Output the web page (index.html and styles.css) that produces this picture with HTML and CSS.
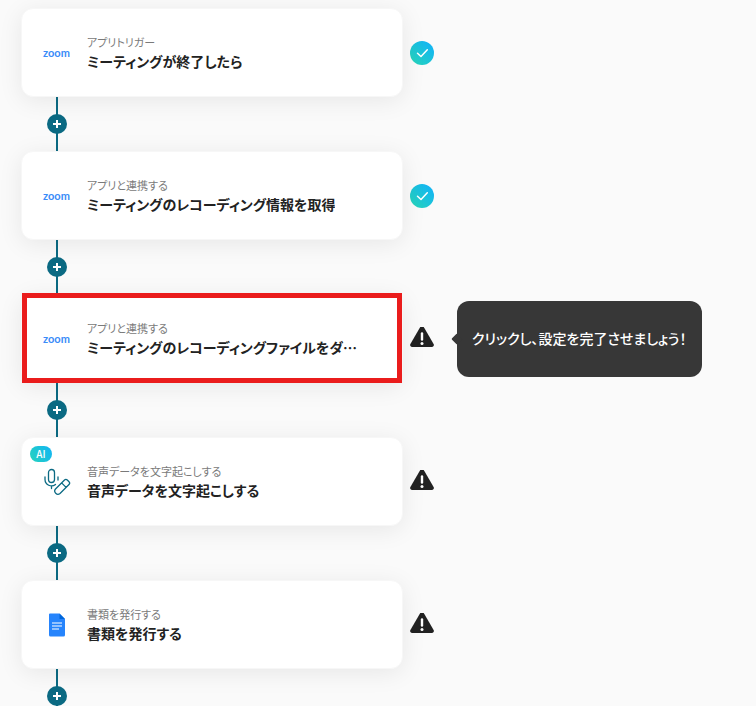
FILE: index.html
```html
<!DOCTYPE html>
<html lang="ja">
<head>
<meta charset="utf-8">
<meta name="viewport" content="width=device-width, initial-scale=1">
<title>フロー</title>
<link rel="stylesheet" href="styles.css">
</head>
<body>
<svg class="defs" aria-hidden="true">
  <defs>
    <linearGradient id="fresh" x1="0" y1="1" x2="1" y2="0">
      <stop offset="0.1" stop-color="#26d3bd"/>
      <stop offset="0.9" stop-color="#12b4f5"/>
    </linearGradient>
    <symbol id="done" viewBox="0 0 24 24">
      <circle cx="12" cy="12" r="12" fill="url(#fresh)"/>
      <path d="M7.5 12.2l3.5 3.3 6.3-6.8" fill="none" stroke="#fff" stroke-width="1.5" stroke-linecap="round" stroke-linejoin="round"/>
    </symbol>
    <symbol id="warn" viewBox="0 0 24 24">
      <path d="M10.1 1.2a2.2 2.2 0 0 1 3.8 0l9.700 16.700a2.100 2.100 0 0 1-1.800 3.100H2.200a2.100 2.100 0 0 1-1.800-3.100z" fill="#222" transform="translate(0 -1)"/>
      <path d="M12 6.500v6" stroke="#fff" stroke-width="2.400" stroke-linecap="round"/>
      <circle cx="12" cy="16.500" r="1.500" fill="#fff"/>
    </symbol>
    <symbol id="plus" viewBox="0 0 20 20">
      <path d="M10 6v8M6 10h8" stroke="#fff" stroke-width="2"/>
    </symbol>
  </defs>
</svg>
<main class="flow">
  <section class="step">
    <button class="card" type="button">
      <span class="app zoom">zoom</span>
      <span class="text"><span class="kind">アプリトリガー</span><span class="title">ミーティングが終了したら</span></span>
    </button>
    <svg class="status" role="img" aria-label="設定済み"><use href="#done"/></svg>
  </section>
  <div class="link"><button class="add" type="button" aria-label="追加"><svg><use href="#plus"/></svg></button></div>

  <section class="step">
    <button class="card" type="button">
      <span class="app zoom">zoom</span>
      <span class="text"><span class="kind">アプリと連携する</span><span class="title">ミーティングのレコーディング情報を取得</span></span>
    </button>
    <svg class="status" role="img" aria-label="設定済み"><use href="#done"/></svg>
  </section>
  <div class="link"><button class="add" type="button" aria-label="追加"><svg><use href="#plus"/></svg></button></div>

  <section class="step">
    <button class="card marked" type="button">
      <span class="app zoom">zoom</span>
      <span class="text"><span class="kind">アプリと連携する</span><span class="title">ミーティングのレコーディングファイルをダ…</span></span>
    </button>
    <svg class="status" role="img" aria-label="未設定"><use href="#warn"/></svg>
    <div class="tip" role="tooltip">クリックし、設定を完了させましょう！</div>
  </section>
  <div class="link"><button class="add" type="button" aria-label="追加"><svg><use href="#plus"/></svg></button></div>

  <section class="step">
    <button class="card" type="button">
      <span class="badge">AI</span>
      <span class="app"><svg class="voice" viewBox="0 0 28 28" aria-hidden="true">
        <g fill="none" stroke="#0b6a83" stroke-width="1.300" stroke-linecap="round" stroke-linejoin="round">
          <rect x="5.500" y="1.500" width="6" height="13" rx="3"/>
          <path d="M2 9v2.500a6.500 6.500 0 0 0 10.500 5M15 9v3M8.500 18v2.500"/>
          <path d="M12.500 21l9-9a2 2 0 0 1 2.800 0l1.700 1.700a2 2 0 0 1 0 2.800l-9 9a3.200 3.200 0 0 1-4.500-4.500zM18.600 14.900l4.500 4.500"/>
        </g>
      </svg></span>
      <span class="text"><span class="kind">音声データを文字起こしする</span><span class="title">音声データを文字起こしする</span></span>
    </button>
    <svg class="status" role="img" aria-label="未設定"><use href="#warn"/></svg>
  </section>
  <div class="link"><button class="add" type="button" aria-label="追加"><svg><use href="#plus"/></svg></button></div>

  <section class="step">
    <button class="card" type="button">
      <span class="app"><svg class="doc" viewBox="0 0 18 24" aria-hidden="true">
        <path d="M2 .5h9.500L17 6v16a1.500 1.500 0 0 1-1.500 1.500h-13A1.500 1.500 0 0 1 1 22V1.500A1 1 0 0 1 2 .5z" fill="#2684fc"/>
        <path d="M11.500.5L17 6h-5.500z" fill="#0066da"/>
        <path d="M4 10h10M4 13h10M4 16h7" stroke="#fff" stroke-width="1.200"/>
      </svg></span>
      <span class="text"><span class="kind">書類を発行する</span><span class="title">書類を発行する</span></span>
    </button>
    <svg class="status" role="img" aria-label="未設定"><use href="#warn"/></svg>
  </section>
  <div class="link"><button class="add" type="button" aria-label="追加"><svg><use href="#plus"/></svg></button></div>
</main>
</body>
</html>
```
FILE: styles.css
```css
* { box-sizing: border-box; }

body {
  margin: 0;
  background: #fafafa;
  color: #222;
  font-family: "Noto Sans CJK JP", sans-serif;
  font-feature-settings: "palt";
  overflow: hidden;
}

.defs {
  position: absolute;
  width: 0;
  height: 0;
}

.flow {
  padding: 8px 21px 0;
}

.step {
  display: flex;
  align-items: center;
}

.card {
  position: relative;
  display: flex;
  align-items: center;
  gap: 16px;
  flex: 0 1 382px;
  min-width: 0;
  padding: 23px 20px 25px;
  border: 1px solid #f7f7f7;
  border-radius: 12px;
  background: #fff;
  box-shadow: 0 4px 24px rgba(0, 0, 0, 0.08);
  color: inherit;
  font: inherit;
  font-feature-settings: inherit;
  text-align: left;
  cursor: pointer;
}

.marked::after {
  content: "";
  position: absolute;
  inset: -2px 0 -1px;
  border: 5px solid #ea1c1c;
}

.app {
  display: flex;
  flex: none;
  justify-content: center;
  width: 29px;
  padding-top: 2px;
}

.zoom {
  color: #3a8cf8;
  font: 700 11px/16px Lato, sans-serif;
}

.voice {
  flex: none;
  width: 28px;
  height: 28px;
}

.doc {
  width: 18px;
  height: 24px;
}

.text {
  display: flex;
  flex-direction: column;
  min-width: 0;
}

.kind {
  color: #7a7a7a;
  font-size: 11px;
  line-height: 20px;
}

.title {
  overflow: hidden;
  font-size: 14px;
  font-weight: 700;
  line-height: 19px;
  text-overflow: ellipsis;
  white-space: nowrap;
}

.badge {
  position: absolute;
  top: 8px;
  left: 8px;
  width: 22px;
  border-radius: 8px;
  background: linear-gradient(60deg, #26d3bd, #12b4f5);
  color: #fff;
  font-size: 10px;
  font-weight: 500;
  line-height: 16px;
  text-align: center;
}

.status {
  flex: none;
  width: 24px;
  height: 24px;
  margin-left: 7px;
  overflow: visible;
}

.status symbol { overflow: visible; }

.tip {
  position: relative;
  margin-left: 23px;
  padding: 23px 15px 25px;
  border-radius: 12px;
  background: #373737;
  color: #fff;
  font-size: 14px;
  font-weight: 500;
  line-height: 28px;
  white-space: nowrap;
}

.tip::before {
  content: "";
  position: absolute;
  top: 50%;
  left: -4px;
  width: 8px;
  height: 8px;
  margin-top: -4px;
  border-radius: 1px;
  background: inherit;
  transform: rotate(45deg);
}

.link {
  display: flex;
  align-items: center;
  justify-content: center;
  width: 20px;
  height: 54px;
  margin-left: 26px;
  background: linear-gradient(#0b6a83, #0b6a83) center / 2px 100% no-repeat;
}

.add {
  display: flex;
  width: 20px;
  height: 20px;
  padding: 0;
  border: 0;
  border-radius: 50%;
  background: #0b6a83;
  cursor: pointer;
}

.add svg {
  width: 20px;
  height: 20px;
}
```
